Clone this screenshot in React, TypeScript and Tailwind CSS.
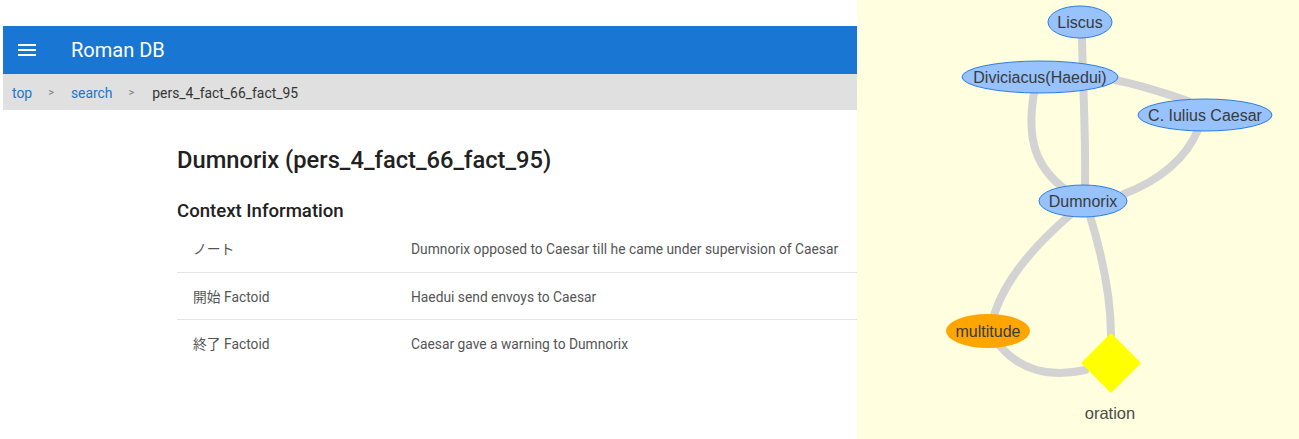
import React from 'react'

const rows = [
  { label: 'ノート', value: 'Dumnorix opposed to Caesar till he came under supervision of Caesar' },
  { label: '開始 Factoid', value: 'Haedui send envoys to Caesar' },
  { label: '終了 Factoid', value: 'Caesar gave a warning to Dumnorix' },
]

const edges = [
  'M1082,38 C1083,90 1086,140 1085,186',
  'M1034,93 C1026,140 1036,168 1066,190',
  'M1115,80 C1145,86 1170,95 1188,101',
  'M1198,130 C1185,160 1160,180 1124,194',
  'M1070,215 C1035,245 1005,280 994,315',
  'M1090,216 C1102,255 1111,300 1111,336',
  'M1000,346 C1020,370 1050,378 1085,370',
]

const ellipses = [
  { cx: 1080, cy: 22, rx: 32, ry: 16, label: 'Liscus' },
  { cx: 1040, cy: 77, rx: 78, ry: 16, label: 'Diviciacus(Haedui)' },
  { cx: 1205, cy: 115, rx: 67, ry: 16, label: 'C. Iulius Caesar' },
  { cx: 1083, cy: 201, rx: 44, ry: 16, label: 'Dumnorix' },
]

const font = "'Liberation Sans', Arial, sans-serif"

function Graph() {
  return (
    <svg width="442" height="439" viewBox="857 0 442 439" className="block">
      {edges.map((d, i) => (
        <path key={i} d={d} fill="none" stroke="#d3d3d3" strokeWidth="8" strokeLinecap="round" />
      ))}
      {ellipses.map((n) => (
        <g key={n.label}>
          <ellipse cx={n.cx} cy={n.cy} rx={n.rx} ry={n.ry} fill="#97c2fc" stroke="#2b7ce9" strokeWidth="1" />
          <text x={n.cx} y={n.cy + 5.5} textAnchor="middle" fontSize="16" fill="#3a3a3a" fontFamily={font}>
            {n.label}
          </text>
        </g>
      ))}
      <ellipse cx="988" cy="331" rx="42" ry="17" fill="#ffa500" />
      <text x="988" y="336.5" textAnchor="middle" fontSize="16" fill="#3a3a3a" fontFamily={font}>
        multitude
      </text>
      <polygon points="1111,333 1141,363 1111,393 1081,363" fill="#ffff00" />
      <text x="1110" y="419" textAnchor="middle" fontSize="16.5" fill="#4a4a4a" fontFamily={font}>
        oration
      </text>
    </svg>
  )
}

export default function App() {
  return (
    <div className="flex w-[1299px] h-[439px] overflow-hidden bg-white font-['Roboto','Noto_Sans_CJK_JP',sans-serif]">
      {/* left page */}
      <div className="w-[857px] shrink-0 pl-[3px] pt-[26px]">
        <header className="h-[48px] bg-[#1976d2] flex items-center">
          <svg width="18" height="12" viewBox="0 0 18 12" className="ml-[15px]">
            <rect x="0" y="0" width="18" height="2" fill="white" />
            <rect x="0" y="5" width="18" height="2" fill="white" />
            <rect x="0" y="10" width="18" height="2" fill="white" />
          </svg>
          <span className="ml-[35px] text-white text-[20px] leading-none">Roman DB</span>
        </header>
        <nav className="h-[36px] bg-[#e0e0e0] flex items-center pl-[9px] pt-[2px] text-[13.9px]">
          <span className="text-[#1976d2]">top</span>
          <span className="ml-[16px] mr-[17px] text-[#777] text-[11px]">&gt;</span>
          <span className="text-[#1976d2]">search</span>
          <span className="ml-[16px] mr-[18px] text-[#777] text-[11px]">&gt;</span>
          <span className="text-[#333]">pers_4_fact_66_fact_95</span>
        </nav>
        <main className="pl-[174px]">
          <h1 className="mt-[36px] text-[23.7px] font-medium text-[#212121] leading-[28px]">
            Dumnorix (pers_4_fact_66_fact_95)
          </h1>
          <h2 className="mt-[25px] text-[18.6px] font-medium text-[#212121] leading-[24px]">Context Information</h2>
          <div className="mt-[2.5px]">
            {rows.map((r, i) => (
              <div
                key={r.label}
                className={`flex items-center h-[47.3px] pt-[2px] text-[13.8px] text-[#555] ${i < rows.length - 1 ? 'border-b border-[#e4e4e4]' : ''}`}
              >
                <div className="w-[234px] pl-[16px]">{r.label}</div>
                <div>{r.value}</div>
              </div>
            ))}
          </div>
        </main>
      </div>
      {/* graph panel */}
      <div className="w-[442px] h-[439px] bg-[#ffffe0]">
        <Graph />
      </div>
    </div>
  )
}
